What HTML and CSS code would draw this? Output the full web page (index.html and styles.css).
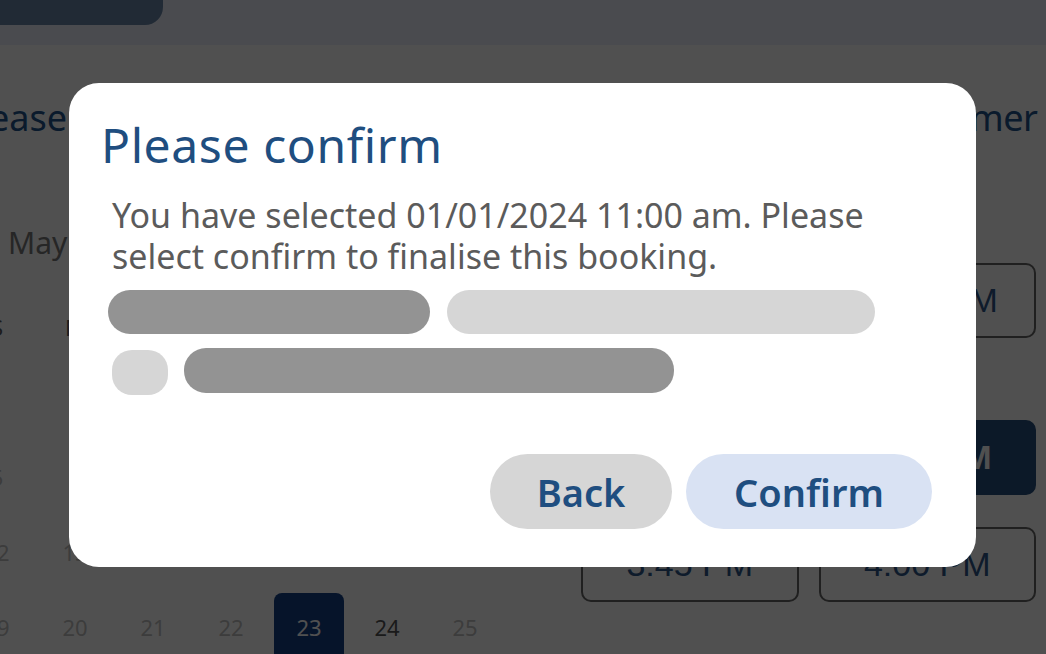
FILE: index.html
```html
<!DOCTYPE html>
<html lang="en">
<head>
  <meta charset="UTF-8" />
  <meta name="viewport" content="width=device-width, initial-scale=1.0"/>
  <title>Book an appointment</title>
  <link rel="stylesheet" href="styles.css">
</head>
<body>

  <div class="topbar">
    <div class="topbar-btn"></div>
  </div>

  <main class="page">
    <!-- date picker -->
    <section class="date-col">
      <h1 class="page-heading">Please select a date</h1>
      <div class="month">May 2024</div>
      <div class="calendar">
        <div class="cell weekday">S</div>
        <div class="cell weekday">M</div>
        <div class="cell weekday">T</div>
        <div class="cell weekday">W</div>
        <div class="cell weekday">T</div>
        <div class="cell weekday">F</div>
        <div class="cell weekday">S</div>

        <div class="cell"></div>
        <div class="cell"></div>
        <div class="cell"></div>
        <div class="cell past">1</div>
        <div class="cell past">2</div>
        <div class="cell past">3</div>
        <div class="cell past">4</div>

        <div class="cell past">5</div>
        <div class="cell past">6</div>
        <div class="cell past">7</div>
        <div class="cell past">8</div>
        <div class="cell past">9</div>
        <div class="cell past">10</div>
        <div class="cell past">11</div>

        <div class="cell past">12</div>
        <div class="cell past">13</div>
        <div class="cell past">14</div>
        <div class="cell past">15</div>
        <div class="cell past">16</div>
        <div class="cell past">17</div>
        <div class="cell past">18</div>

        <div class="cell past">19</div>
        <div class="cell past">20</div>
        <div class="cell past">21</div>
        <div class="cell past">22</div>
        <div class="cell selected">23</div>
        <div class="cell">24</div>
        <div class="cell past">25</div>
      </div>
    </section>

    <!-- time slots -->
    <section class="time-col">
      <h1 class="page-heading times">Choose a time for customer</h1>

      <div class="slot-group first">
        <div class="slot-label">Morning</div>
        <div class="slots">
          <button class="slot">11:30 AM</button>
          <button class="slot">11:45 AM</button>
        </div>
      </div>

      <div class="slot-group">
        <div class="slot-label">Afternoon</div>
        <div class="slots">
          <button class="slot">3:15 PM</button>
          <button class="slot active">3:30 PM</button>
          <button class="slot">3:45 PM</button>
          <button class="slot">4:00 PM</button>
        </div>
      </div>
    </section>
  </main>

  <!-- confirm dialog -->
  <div class="overlay">
    <div class="modal">
      <h2 class="modal-title">Please confirm</h2>
      <p class="modal-text">You have selected 01/01/2024 11:00 am. Please select confirm to finalise this booking.</p>

      <div class="skeleton-row">
        <div class="bar dark w-322"></div>
        <div class="bar light w-428"></div>
      </div>
      <div class="skeleton-row second">
        <div class="bar light dot"></div>
        <div class="bar dark w-490"></div>
      </div>

      <div class="modal-actions">
        <button class="btn btn-back">Back</button>
        <button class="btn btn-confirm">Confirm</button>
      </div>
    </div>
  </div>

</body>
</html>
```

FILE: styles.css
```css
body {
  font-family: 'Noto Sans', 'Open Sans', sans-serif;
  background-color: #ffffff;
  margin: 0;
  padding: 0;
  overflow: hidden;
  height: 654px;
}

.topbar {
  height: 45px;
  background-color: #ecf0fc;
  overflow: hidden;
}

.topbar-btn {
  width: 180px;
  height: 50px;
  margin-top: -25px;
  margin-left: -17px;
  background-color: #6986a9;
  border-radius: 18px;
}

.page {
  display: flex;
  gap: 77px;
  margin-left: -42px;
  padding-top: 49px;
}

.page-heading {
  margin: 0;
  font-size: 36px;
  line-height: 48px;
  font-weight: normal;
  color: #20538c;
  white-space: nowrap;
}

.page-heading.times {
  letter-spacing: -0.5px;
}

/* calendar */
.date-col {
  width: 546px;
  flex-shrink: 0;
}

.month {
  margin-top: 81px;
  padding-left: 50px;
  font-size: 30px;
  line-height: 40px;
  color: #7a7a7a;
}

.calendar {
  margin-top: 30px;
  display: grid;
  grid-template-columns: repeat(7, 78px);
  grid-auto-rows: 68px;
  row-gap: 7px;
}

.cell {
  display: flex;
  align-items: center;
  justify-content: center;
  font-size: 22px;
  color: #555555;
}

.cell.weekday {
  color: #5a5a5a;
}

.cell.past {
  color: #bfbfbf;
}

.cell.selected {
  margin: 0 4px;
  background-color: #134086;
  color: #ffffff;
  border-radius: 8px;
}

/* time slots */
.time-col {
  width: 455px;
  flex-shrink: 0;
}

.slot-group {
  margin-top: 25px;
}

.slot-group.first {
  margin-top: 64px;
}

.slot-label {
  height: 32px;
  margin-bottom: 25px;
  font-size: 24px;
  line-height: 32px;
  color: #555555;
}

.slots {
  display: grid;
  grid-template-columns: 1fr 1fr;
  column-gap: 20px;
  row-gap: 32px;
}

.slot {
  height: 75px;
  background: transparent;
  border: 2px solid #666666;
  border-radius: 10px;
  font-family: 'Liberation Sans', Arial, sans-serif;
  font-size: 34px;
  color: #2d5689;
  padding: 0;
}

.slot.active {
  background-color: #27507f;
  border-color: #27507f;
  color: #ffffff;
  font-weight: bold;
}

/* dialog */
.overlay {
  position: fixed;
  top: 0;
  left: 0;
  right: 0;
  bottom: 0;
  background-color: rgba(0, 0, 0, 0.686);
  display: flex;
  justify-content: center;
  align-items: flex-start;
  padding-top: 83px;
  padding-right: 1px;
}

.modal {
  width: 907px;
  box-sizing: border-box;
  background-color: #ffffff;
  border-radius: 30px;
  padding: 34px 44px 38px 39px;
}

.modal-title {
  margin: 0 0 0 -7px;
  font-size: 48px;
  line-height: 56px;
  font-weight: normal;
  letter-spacing: 0.6px;
  color: #1f4e80;
}

.modal-text {
  margin: 22px 0 0 4px;
  font-size: 34px;
  line-height: 41px;
  color: #5b5b5b;
}

.skeleton-row {
  display: flex;
  align-items: flex-start;
  gap: 17px;
  margin-top: 13px;
}

.skeleton-row.second {
  gap: 16px;
  margin-top: 14px;
}

.bar {
  height: 44px;
  border-radius: 22px;
}

.bar.dark { background-color: #939393; }
.bar.light { background-color: #d6d6d6; }

.w-322 { width: 322px; }
.w-428 { width: 428px; }
.w-490 { width: 490px; height: 45px; }

.bar.dot {
  width: 56px;
  height: 45px;
  margin-top: 2px;
  margin-left: 4px;
  border-radius: 20px;
}

.modal-actions {
  display: flex;
  justify-content: flex-end;
  gap: 14px;
  margin-top: 59px;
}

.btn {
  height: 75px;
  border: none;
  border-radius: 38px;
  font-family: 'Noto Sans', 'Open Sans', sans-serif;
  font-size: 38px;
  font-weight: 600;
  color: #1f4e80;
  padding: 0;
}

.btn-back {
  width: 182px;
  background-color: #d6d6d6;
}

.btn-confirm {
  width: 246px;
  background-color: #d9e2f3;
}
```
